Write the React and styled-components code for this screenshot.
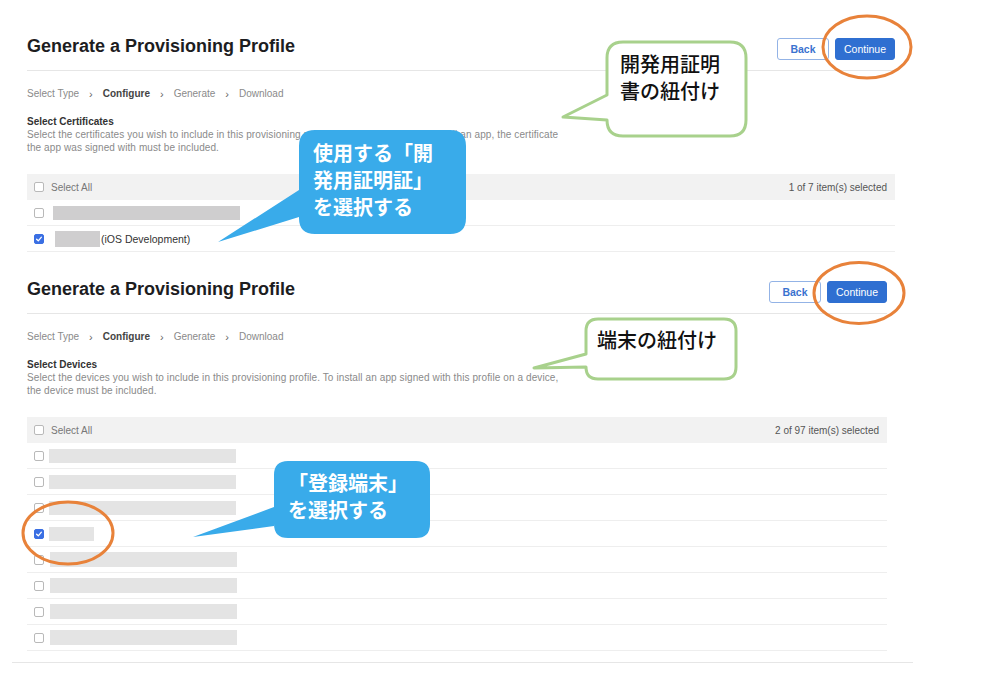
import React from 'react';
import styled, { createGlobalStyle } from 'styled-components';

const GlobalStyle = createGlobalStyle`
	html, body {
		margin: 0;
		padding: 0;
		background: #ffffff;
	}

	body {
		font-family: "Liberation Sans", Arial, sans-serif;
		color: #222;
	}
`;

const colors = {
	line: '#e6e6e6',
	rowLine: '#eeeeee',
	grey: '#8a8a8a',
	blue: '#2f6fd1',
	callout: '#39abea',
	green: '#a8d18c',
	orange: '#e8823a',
};

const Canvas = styled.div`
	position: relative;
	width: 983px;
	height: 689px;
	overflow: hidden;
`;

const Sheet = styled.div`
	width: 901px;
	margin-left: 12px;
	padding: 35px 0 11px 15px;
	box-sizing: border-box;
	border-bottom: 1px solid ${colors.line};
`;

const Panel = styled.section`
	width: ${p => p.$width}px;
	margin-top: ${p => p.$gap || 0}px;
`;

const Header = styled.div`
	display: flex;
	align-items: flex-start;
	justify-content: space-between;
	padding-bottom: 10px;
	border-bottom: 1px solid ${colors.line};
`;

const Title = styled.h1`
	margin: 0;
	font-size: 18px;
	line-height: 22px;
	font-weight: 700;
	color: #1d1d1f;
`;

const Actions = styled.div`
	display: flex;
	gap: 6px;
	margin-top: 3px;
`;

const Button = styled.button`
	height: 22px;
	width: ${p => (p.$primary ? 60 : 52)}px;
	padding: 0;
	border-radius: 3px;
	font-family: "Liberation Sans", Arial, sans-serif;
	font-size: 10.5px;
	font-weight: ${p => (p.$primary ? 400 : 700)};
	border: 1px solid ${p => (p.$primary ? colors.blue : '#93b3e6')};
	background: ${p => (p.$primary ? colors.blue : '#fff')};
	color: ${p => (p.$primary ? '#fff' : '#3a72cf')};
`;

const Crumbs = styled.nav`
	display: flex;
	align-items: center;
	gap: 10px;
	margin-top: 16px;
	font-size: 10px;
	line-height: 14px;
	color: ${colors.grey};
`;

const Crumb = styled.span`
	font-weight: ${p => (p.$active ? 700 : 400)};
	color: ${p => (p.$active ? '#444' : colors.grey)};
`;

const Chevron = styled.span`
	font-size: 11px;
	color: #666;
`;

const SectionTitle = styled.h2`
	margin: 14px 0 0;
	font-size: 10px;
	line-height: 13px;
	font-weight: 700;
	color: #333;
`;

const Description = styled.p`
	margin: 0;
	font-size: 10px;
	line-height: 13px;
	letter-spacing: 0.1px;
	white-space: nowrap;
	color: ${colors.grey};
`;

const Table = styled.div`
	margin-top: 20px;
`;

const HeadRow = styled.div`
	display: flex;
	align-items: center;
	justify-content: space-between;
	height: 26px;
	padding: 0 8px 0 7px;
	background: #f2f2f2;
	font-size: 10px;
	color: #777;
`;

const HeadLabel = styled.label`
	display: flex;
	align-items: center;
	gap: 7px;
`;

const Count = styled.span`
	color: #555;
`;

const Row = styled.div`
	display: flex;
	align-items: center;
	height: 26px;
	padding-left: 7px;
	box-sizing: border-box;
	border-bottom: 1px solid ${colors.rowLine};
	font-size: 10.5px;
	color: #333;
`;

const Box = styled.span`
	flex: none;
	width: 10px;
	height: 10px;
	box-sizing: border-box;
	border-radius: 2px;
	border: 1px solid ${p => (p.$checked ? '#3a6fe3' : '#b9b9b9')};
	background: ${p => (p.$checked ? '#3a6fe3' : '#fff')};
	display: flex;
	align-items: center;
	justify-content: center;
`;

const Redacted = styled.span`
	display: block;
	width: ${p => p.$w}px;
	height: ${p => p.$h || 14}px;
	margin-left: ${p => p.$ml}px;
	margin-right: 1px;
	background: ${p => p.$tone};
`;

const Overlay = styled.svg`
	position: absolute;
	left: 0;
	top: 0;
	pointer-events: none;
`;

const Bubble = styled.div`
	position: absolute;
	box-sizing: border-box;
	font-family: "Noto Sans CJK JP", sans-serif;
	font-size: 20px;
	line-height: 27px;
	white-space: nowrap;
	font-weight: ${p => (p.$tone === 'blue' ? 700 : 500)};
	color: ${p => (p.$tone === 'blue' ? '#fff' : '#111')};
`;

function Check({ checked }) {
	return (
		<Box $checked={checked}>
			{checked && (
				<svg width="8" height="8" viewBox="0 0 8 8">
					<path d="M1.6 4.2 L3.3 5.8 L6.4 2.2" fill="none" stroke="#fff" strokeWidth="1.3" strokeLinecap="round" strokeLinejoin="round" />
				</svg>
			)}
		</Box>
	);
}

function Breadcrumbs() {
	const steps = ['Select Type', 'Configure', 'Generate', 'Download'];
	return (
		<Crumbs>
			{steps.map((s, i) => (
				<React.Fragment key={s}>
					{i > 0 && <Chevron>›</Chevron>}
					<Crumb $active={s === 'Configure'}>{s}</Crumb>
				</React.Fragment>
			))}
		</Crumbs>
	);
}

function Profile({ width, gap, section, lines, count, children }) {
	return (
		<Panel $width={width} $gap={gap}>
			<Header>
				<Title>Generate a Provisioning Profile</Title>
				<Actions>
					<Button>Back</Button>
					<Button $primary>Continue</Button>
				</Actions>
			</Header>
			<Breadcrumbs />
			<SectionTitle>{section}</SectionTitle>
			{lines.map(l => (
				<Description key={l}>{l}</Description>
			))}
			<Table>
				<HeadRow>
					<HeadLabel>
						<Check />
						Select All
					</HeadLabel>
					<Count>{count}</Count>
				</HeadRow>
				{children}
			</Table>
		</Panel>
	);
}

const devices = [
	{ w: 187, ml: 5 },
	{ w: 187, ml: 5 },
	{ w: 187, ml: 5 },
	{ w: 45, ml: 5, checked: true },
	{ w: 187, ml: 6, h: 15 },
	{ w: 187, ml: 6, h: 15 },
	{ w: 187, ml: 6, h: 15 },
	{ w: 187, ml: 6, h: 15 },
];

// rounded box with a pointer coming out of its left side
function bubblePath(x, y, w, h, r, top, tip, bottom) {
	return [
		`M${x + r} ${y}`,
		`H${x + w - r}`,
		`Q${x + w} ${y} ${x + w} ${y + r}`,
		`V${y + h - r}`,
		`Q${x + w} ${y + h} ${x + w - r} ${y + h}`,
		`H${x + r}`,
		`Q${x} ${y + h} ${x} ${y + h - r}`,
		`V${bottom}`,
		`L${tip[0]} ${tip[1]}`,
		`L${x} ${top}`,
		`V${y + r}`,
		`Q${x} ${y} ${x + r} ${y}`,
		'Z',
	].join(' ');
}

const callouts = [
	{ tone: 'green', x: 607, y: 42, w: 139, h: 94, r: 16, top: 95, tip: [563, 117], bottom: 120, pad: [8, 13], lines: ['開発用証明', '書の紐付け'] },
	{ tone: 'blue', x: 299, y: 130, w: 167, h: 104, r: 16, top: 190, tip: [218, 242], bottom: 217, pad: [9, 14], lines: ['使用する「開', '発用証明証」', 'を選択する'] },
	{ tone: 'green', x: 586, y: 319, w: 150, h: 60, r: 12, top: 354, tip: [534, 368], bottom: 367, pad: [7, 11], lines: ['端末の紐付け'] },
	{ tone: 'blue', x: 274, y: 461, w: 156, h: 77, r: 14, top: 507, tip: [193, 537], bottom: 526, pad: [8, 14], lines: ['「登録端末」', 'を選択する'] },
];

const rings = [
	{ cx: 867, cy: 47, rx: 44, ry: 31 },
	{ cx: 859, cy: 293, rx: 45, ry: 30.5 },
	{ cx: 68, cy: 533, rx: 45, ry: 31 },
];

export default function App() {
	return (
		<Canvas>
			<GlobalStyle />
			<Sheet>
				<Profile
					width={868}
					section="Select Certificates"
					lines={[
						'Select the certificates you wish to include in this provisioning profile. To use this profile to install an app, the certificate',
						'the app was signed with must be included.',
					]}
					count="1 of 7 item(s) selected"
				>
					<Row>
						<Check />
						<Redacted $w={187} $ml={9} $tone="#cfcecf" />
					</Row>
					<Row>
						<Check checked />
						<Redacted $w={45} $h={16} $ml={11} $tone="#cfcecf" />
						(iOS Development)
					</Row>
				</Profile>

				<Profile
					width={860}
					gap={26}
					section="Select Devices"
					lines={[
						'Select the devices you wish to include in this provisioning profile. To install an app signed with this profile on a device,',
						'the device must be included.',
					]}
					count="2 of 97 item(s) selected"
				>
					{devices.map((d, i) => (
						<Row key={i}>
							<Check checked={d.checked} />
							<Redacted $w={d.w} $h={d.h} $ml={d.ml} $tone="#e4e4e4" />
						</Row>
					))}
				</Profile>
			</Sheet>

			<Overlay width="983" height="689" viewBox="0 0 983 689">
				{callouts.map((c, i) => (
					<path
						key={i}
						d={bubblePath(c.x, c.y, c.w, c.h, c.r, c.top, c.tip, c.bottom)}
						fill={c.tone === 'blue' ? colors.callout : '#fff'}
						stroke={c.tone === 'blue' ? 'none' : colors.green}
						strokeWidth="3"
						strokeLinejoin="round"
					/>
				))}
				{rings.map((r, i) => (
					<ellipse key={i} cx={r.cx} cy={r.cy} rx={r.rx} ry={r.ry} fill="none" stroke={colors.orange} strokeWidth="3" />
				))}
			</Overlay>

			{callouts.map((c, i) => (
				<Bubble
					key={i}
					$tone={c.tone}
					style={{ left: c.x, top: c.y, width: c.w, height: c.h, padding: `${c.pad[0]}px 0 0 ${c.pad[1]}px` }}
				>
					{c.lines.map(l => (
						<div key={l}>{l}</div>
					))}
				</Bubble>
			))}
		</Canvas>
	);
}
